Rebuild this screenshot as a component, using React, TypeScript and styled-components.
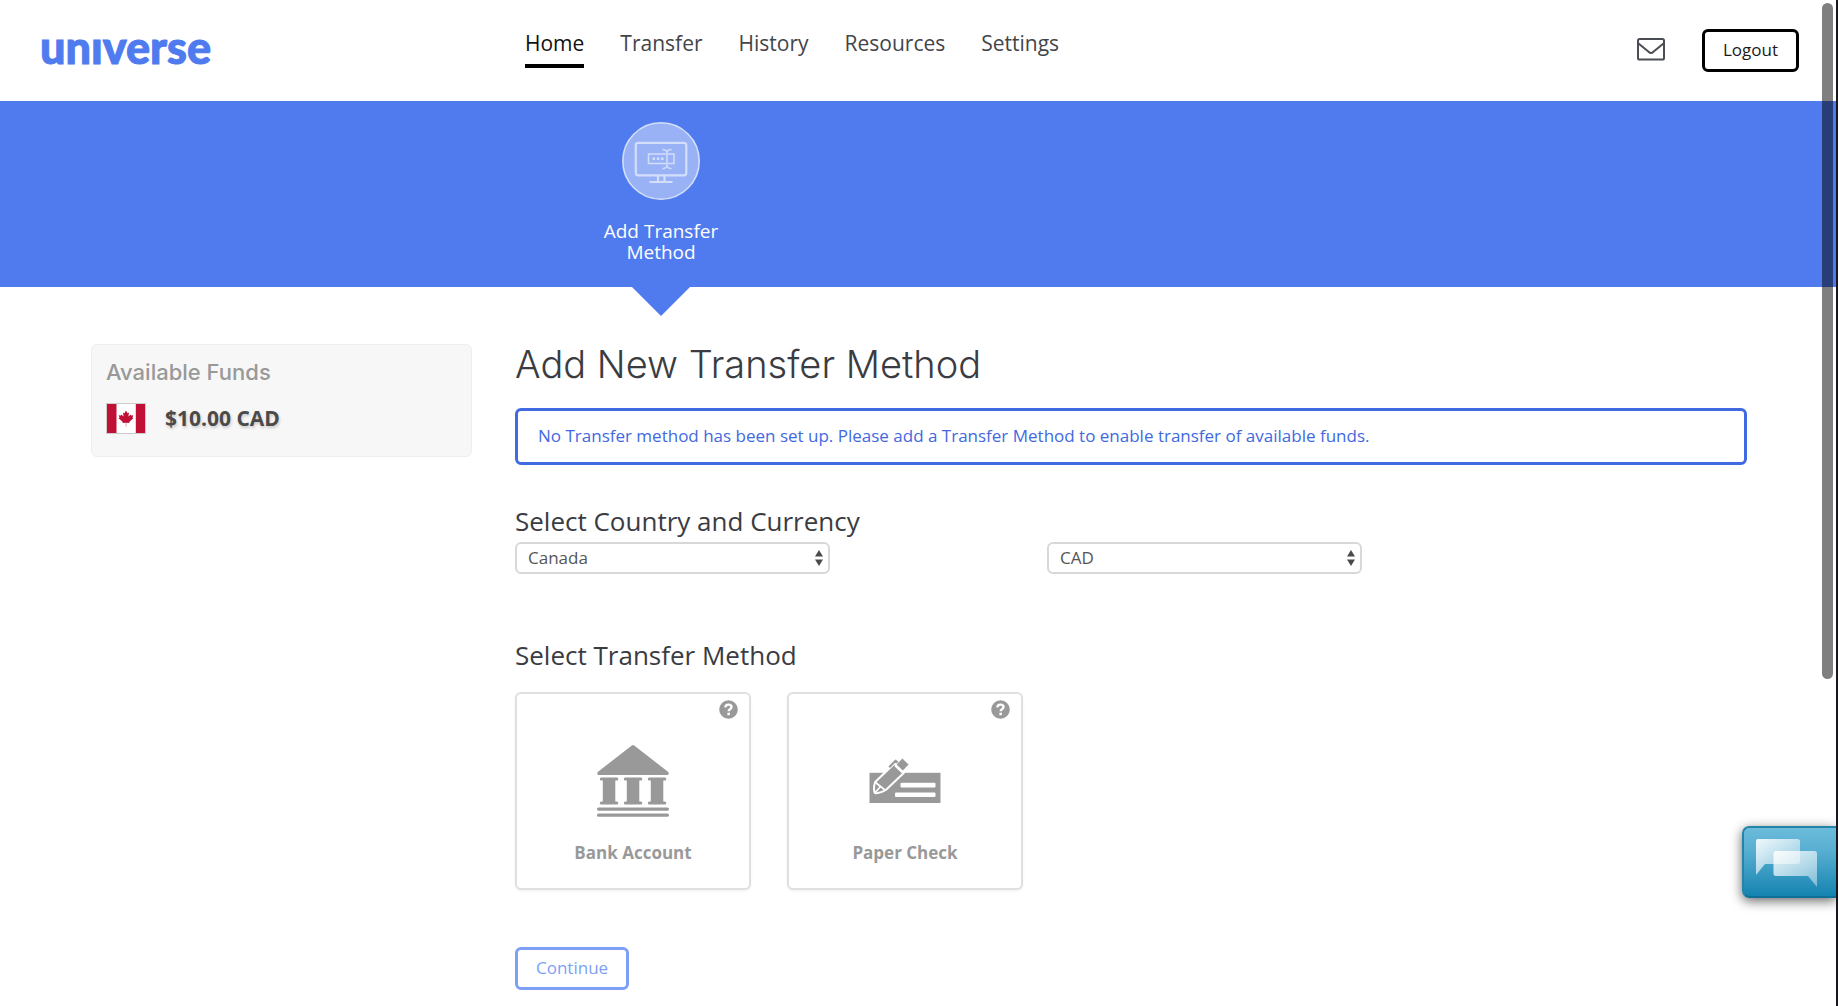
import React from "react";
import styled, { createGlobalStyle } from "styled-components";

const colors = {
  blue: "#4f7bee",
  royal: "#4169e1",
  softBlue: "#7d9ff6",
  ink: "#3a3c42",
  grey: "#999999",
  line: "#e0e0e0",
};

const GlobalStyle = createGlobalStyle`
  *, *::before, *::after { box-sizing: border-box; }
  body {
    margin: 0;
    background: #ffffff;
    color: ${colors.ink};
    font-family: "Open Sans", "Noto Sans", sans-serif;
    font-size: 17px;
    line-height: 24px;
  }
  button, select { font: inherit; }
  h1, h2, p { margin: 0; }
`;

const Page = styled.div`
  min-height: 100vh;
`;

const Header = styled.header`
  display: grid;
  grid-template-columns: 485px 1fr auto;
  align-items: center;
  min-height: 101px;
  padding: 0 39px 0 40px;
`;

const Brand = styled.a`
  color: ${colors.blue};
  font-family: Lato, sans-serif;
  font-size: 45px;
  font-weight: 900;
  line-height: 44px;
  padding-bottom: 8px;
  text-decoration: none;
  -webkit-text-stroke: 1px ${colors.blue};
`;

const Nav = styled.nav`
  display: flex;
  gap: 36px;
  margin-bottom: 6px;
`;

const NavLink = styled.a<{ $active?: boolean }>`
  padding-bottom: 6px;
  border-bottom: 4px solid ${(p) => (p.$active ? "#000000" : "transparent")};
  color: ${(p) => (p.$active ? "#111111" : "#43454b")};
  font-size: 21px;
  line-height: 30px;
  text-decoration: none;
`;

const Actions = styled.div`
  display: flex;
  align-items: center;
  gap: 37px;
`;

const IconButton = styled.button`
  display: flex;
  padding: 0;
  border: 0;
  background: none;
  cursor: pointer;
`;

const OutlineButton = styled.button<{ $tone: string; $ink: string }>`
  height: 43px;
  padding: 0 18px 2px;
  border: 3px solid ${(p) => p.$tone};
  border-radius: 6px;
  background: #ffffff;
  color: ${(p) => p.$ink};
  cursor: pointer;
`;

const Columns = styled.div`
  display: grid;
  grid-template-columns: minmax(0, 381px) minmax(0, 1fr);
  column-gap: 43px;
  padding: 0 91px;
`;

const Banner = styled.section`
  background: ${colors.blue};
`;

const Step = styled.div`
  position: relative;
  grid-column: 2;
  display: flex;
  flex-direction: column;
  align-items: center;
  gap: 21px;
  width: 146px;
  margin-left: 73px;
  padding: 21px 0 24px;

  &::after {
    content: "";
    position: absolute;
    top: 100%;
    left: 50%;
    margin-left: -29px;
    border: 29px solid transparent;
    border-top-color: ${colors.blue};
    border-bottom: 0;
  }
`;

const StepLabel = styled.p`
  width: 120px;
  color: #ffffff;
  font-size: 19px;
  line-height: 21px;
  text-align: center;
`;

const Content = styled(Columns)`
  align-items: start;
  padding-top: 57px;
  padding-bottom: 16px;
`;

const FundsCard = styled.aside`
  padding: 14px 14px 21px;
  border: 1px solid #eeeeee;
  border-radius: 6px;
  background: #f7f7f7;
`;

const FundsTitle = styled.h2`
  color: ${colors.grey};
  font-family: Inter, sans-serif;
  font-size: 22px;
  font-weight: 500;
  line-height: 26px;
`;

const FundsRow = styled.div`
  display: flex;
  align-items: center;
  gap: 19px;
  margin-top: 16px;
`;

const FundsAmount = styled.span`
  color: #4a4a4a;
  font-size: 21px;
  font-weight: 700;
  line-height: 34px;
  text-shadow: 1px 2px 3px rgba(0, 0, 0, 0.18);
`;

const Title = styled.h1`
  font-family: Inter, sans-serif;
  font-size: 38px;
  font-weight: 300;
  line-height: 40px;
`;

const Notice = styled.p`
  margin-top: 24px;
  padding: 13px 20px 14px;
  border: 3px solid ${colors.royal};
  border-radius: 6px;
  color: ${colors.royal};
`;

const SectionTitle = styled.h2<{ $gap: number }>`
  margin-top: ${(p) => p.$gap}px;
  font-size: 26px;
  font-weight: 400;
  line-height: 32px;
`;

const Selects = styled.div`
  display: grid;
  grid-template-columns: 315px 315px;
  gap: 217px;
  margin-top: 5px;
`;

const SelectBox = styled.div`
  display: grid;
  align-items: center;

  & > * {
    grid-area: 1 / 1;
  }

  & > svg {
    justify-self: end;
    margin-right: 6px;
    pointer-events: none;
  }
`;

const Select = styled.select`
  appearance: none;
  width: 100%;
  height: 32px;
  padding: 0 28px 0 11px;
  border: 2px solid #d8d8d8;
  border-radius: 6px;
  background: #ffffff;
  color: #555555;
`;

const Methods = styled.div`
  display: flex;
  flex-wrap: wrap;
  gap: 36px;
  margin-top: 21px;
`;

const MethodCard = styled.div`
  position: relative;
  width: 236px;
`;

const MethodButton = styled.button`
  display: flex;
  flex-direction: column;
  align-items: center;
  gap: 24px;
  width: 100%;
  padding: 51px 0 23px;
  border: 2px solid ${colors.line};
  border-radius: 6px;
  background: #ffffff;
  box-shadow: 0 1px 3px rgba(0, 0, 0, 0.06);
  color: ${colors.grey};
  font-weight: 700;
  cursor: pointer;
`;

const HelpButton = styled(IconButton)`
  position: absolute;
  top: 8px;
  right: 13px;
`;

const Footer = styled.div`
  margin-top: 57px;
`;

const ChatButton = styled.button`
  position: fixed;
  right: 2px;
  bottom: 108px;
  display: flex;
  width: 94px;
  height: 72px;
  padding: 11px 0 0 12px;
  border: 2px solid #2484a8;
  border-right: 0;
  border-bottom-color: #0f6f97;
  border-radius: 7px 0 0 7px;
  background: linear-gradient(#6cbbdb, #56aed1 35%, #1583b0);
  box-shadow: 0 3px 12px rgba(0, 0, 0, 0.6);
  cursor: pointer;
`;

const ScrollThumb = styled.div`
  position: fixed;
  top: 3px;
  right: 5px;
  width: 11px;
  height: 67.2vh;
  border-radius: 6px;
  background: rgba(0, 0, 0, 0.5);
`;

const WindowEdge = styled.div`
  position: fixed;
  top: 0;
  right: 0;
  bottom: 0;
  width: 2px;
  background: #16181c;
`;

const MailIcon = () => (
  <svg width="28" height="26" viewBox="0 0 28 26" fill="none" stroke="#4b4d54" strokeWidth="2" strokeLinejoin="round">
    <rect x="1" y="1" width="26" height="20.5" rx="1.6" />
    <path d="M1.5 5.5 11.6 13.8Q14 16.4 16.4 13.8L26.5 5.5" />
  </svg>
);

const StepIcon = () => (
  <svg width="78" height="78" viewBox="0 0 78 78" fill="none" stroke="#d3defb">
    <circle cx="39" cy="39" r="38.2" fill="#99b2f6" strokeWidth="1.6" />
    <rect x="13.8" y="20.8" width="50.5" height="32.5" rx="2.5" strokeWidth="2.2" />
    <path d="M36 54v5.5M42.5 54v5.5M27.5 60h23" strokeWidth="2.2" />
    <path d="M44 32H26.5v9.5H44M46 32h6v9.5h-6M45 30v14M40.5 27.500q4 0 4.5 3 .5-3 4.500-3M40.500 46.500q4 0 4.500-3 .5 3 4.500 3" strokeWidth="1.5" />
    <path d="M30.500 36.800h2.600M34.800 36.800h2.600M39 36.800h2.600" strokeWidth="2.6" />
  </svg>
);

const FlagIcon = () => (
  <svg width="40" height="31" viewBox="0 0 40 31" role="img" aria-label="Canada">
    <rect width="40" height="31" fill="#cccccc" />
    <rect x="1" y="1" width="38" height="29" fill="#ffffff" />
    <path d="M1 1h9.500v29H1zM29.800 1H39v29h-9.200z" fill="#c11035" />
    <path
      d="M20 7.500l1.500 2.800 1.500-.7-.6 4 2.300-2.200.4 1.100 2.200-.3-.8 2.600.9.500-4.200 3.600.4 1.200-3.400-.4v3.800h-.4v-3.800l-3.400.4.400-1.200-4.200-3.600.9-.5-.8-2.600 2.200.3.400-1.100 2.300 2.200-.6-4 1.500.7z"
      fill="#c11035"
    />
  </svg>
);

const StepperIcon = () => (
  <svg width="10" height="16" viewBox="0 0 10 16" fill="#4a4a4a">
    <path d="M5 0l4 6.500H1zM5 16L1 9.500h8z" />
  </svg>
);

const HelpIcon = () => (
  <svg width="19" height="19" viewBox="0 0 19 19">
    <circle cx="9.500" cy="9.500" r="9.300" fill={colors.grey} />
    <path d="M6.300 7.300Q6.500 4.600 9.500 4.600q3 0 3 2.500 0 1.300-1.500 2.200-1.300.8-1.300 2" fill="none" stroke="#ffffff" strokeWidth="2.400" />
    <rect x="8.400" y="12.700" width="2.500" height="2.500" fill="#ffffff" />
  </svg>
);

const column = "h15.500a1.500 1.500 0 0 1 0 3h-1.500v21h1.500a1.500 1.500 0 0 1 0 3h-15.500a1.500 1.500 0 0 1 0-3h1.500v-21h-1.500a1.500 1.500 0 0 1 0-3z";

const BankIcon = () => (
  <svg width="72" height="72" viewBox="0 0 72 72" fill={colors.grey}>
    <path d="M34.800.5q1.200-.8 2.400 0L71.300 27q1.200 3-1 3H1.700q-2.200 0-1-3z" />
    <path d={`M4.300 32.500${column}M28.300 32.500${column}M52.300 32.500${column}`} />
    <rect y="62.500" width="72" height="3.200" rx="1.600" />
    <rect y="68.500" width="72" height="3.300" rx="1.600" />
  </svg>
);

const CheckIcon = () => (
  <svg width="72" height="72" viewBox="0 0 72 72" strokeLinejoin="round">
    <rect x=".5" y="27.800" width="71" height="30.200" fill={colors.grey} />
    <rect x="31.500" y="37.800" width="35" height="4.600" rx="1" fill="#ffffff" />
    <rect x="26" y="47.400" width="40.500" height="4.600" rx="1" fill="#ffffff" />
    <path d="M6.200 37 25.500 18.500 35 27.800 16.800 45Q11 48.800 5.800 48 4 43 6.200 37z" fill={colors.grey} stroke="#ffffff" strokeWidth="2" />
    <path d="M6.500 37.500 16 45M6 47.800 11 42" stroke="#ffffff" strokeWidth="1.600" />
    <path d="M33.400 13.600 39.600 19.600 33.800 25.500 27.600 19.500z" fill={colors.grey} />
    <path d="M26 20.500 33.500 27.500" stroke="#ffffff" strokeWidth="1.800" />
    <path d="M20.200 22.300 26.600 15.700 28.600 17.600" fill="none" stroke={colors.grey} strokeWidth="2.200" />
  </svg>
);

const ChatIcon = () => (
  <svg width="64" height="50" viewBox="0 0 64 50">
    <defs>
      <linearGradient id="bubbleBack" x1="0" y1="0" x2="1" y2="1">
        <stop offset="0" stopColor="#ffffff" stopOpacity=".9" />
        <stop offset="1" stopColor="#ffffff" stopOpacity=".3" />
      </linearGradient>
      <linearGradient id="bubbleFront" x1="0" y1="0" x2="1" y2="1">
        <stop offset="0" stopColor="#ffffff" stopOpacity=".85" />
        <stop offset="1" stopColor="#ffffff" stopOpacity=".4" />
      </linearGradient>
    </defs>
    <path d="M2 0h39.500q2.500 0 2.500 2.500v20q0 2.500-2.500 2.500H9L0 36V2Q0 0 2 0z" fill="url(#bubbleBack)" />
    <path d="M20 12h38.500q2.500 0 2.500 2.500V48L52 37H20q-2.500 0-2.500-2.500v-20Q17.500 12 20 12z" fill="url(#bubbleFront)" />
  </svg>
);

const links = ["Home", "Transfer", "History", "Resources", "Settings"];

const methods = [
  { name: "Bank Account", icon: <BankIcon /> },
  { name: "Paper Check", icon: <CheckIcon /> },
];

function Dropdown({ label, options }: { label: string; options: string[] }) {
  return (
    <SelectBox>
      <Select aria-label={label}>
        {options.map((o) => (
          <option key={o}>{o}</option>
        ))}
      </Select>
      <StepperIcon />
    </SelectBox>
  );
}

export default function App() {
  return (
    <Page>
      <GlobalStyle />
      <Header>
        <Brand href="#" aria-label="universe">unıverse</Brand>
        <Nav>
          {links.map((name) => (
            <NavLink key={name} href="#" $active={name === "Home"}>
              {name}
            </NavLink>
          ))}
        </Nav>
        <Actions>
          <IconButton aria-label="Messages">
            <MailIcon />
          </IconButton>
          <OutlineButton $tone="#000000" $ink="#1a1a1a">Logout</OutlineButton>
        </Actions>
      </Header>

      <Banner>
        <Columns>
          <Step>
            <StepIcon />
            <StepLabel>Add Transfer Method</StepLabel>
          </Step>
        </Columns>
      </Banner>

      <Content>
        <FundsCard>
          <FundsTitle>Available Funds</FundsTitle>
          <FundsRow>
            <FlagIcon />
            <FundsAmount>$10.00 CAD</FundsAmount>
          </FundsRow>
        </FundsCard>

        <main>
          <Title>Add New Transfer Method</Title>
          <Notice>
            No Transfer method has been set up. Please add a Transfer Method to enable transfer of available funds.
          </Notice>

          <SectionTitle $gap={40}>Select Country and Currency</SectionTitle>
          <Selects>
            <Dropdown label="Country" options={["Canada"]} />
            <Dropdown label="Currency" options={["CAD"]} />
          </Selects>

          <SectionTitle $gap={65}>Select Transfer Method</SectionTitle>
          <Methods>
            {methods.map((m) => (
              <MethodCard key={m.name}>
                <MethodButton>
                  {m.icon}
                  {m.name}
                </MethodButton>
                <HelpButton aria-label={`About ${m.name}`}>
                  <HelpIcon />
                </HelpButton>
              </MethodCard>
            ))}
          </Methods>

          <Footer>
            <OutlineButton $tone={colors.softBlue} $ink={colors.softBlue}>Continue</OutlineButton>
          </Footer>
        </main>
      </Content>

      <ChatButton aria-label="Chat">
        <ChatIcon />
      </ChatButton>
      <ScrollThumb />
      <WindowEdge />
    </Page>
  );
}
